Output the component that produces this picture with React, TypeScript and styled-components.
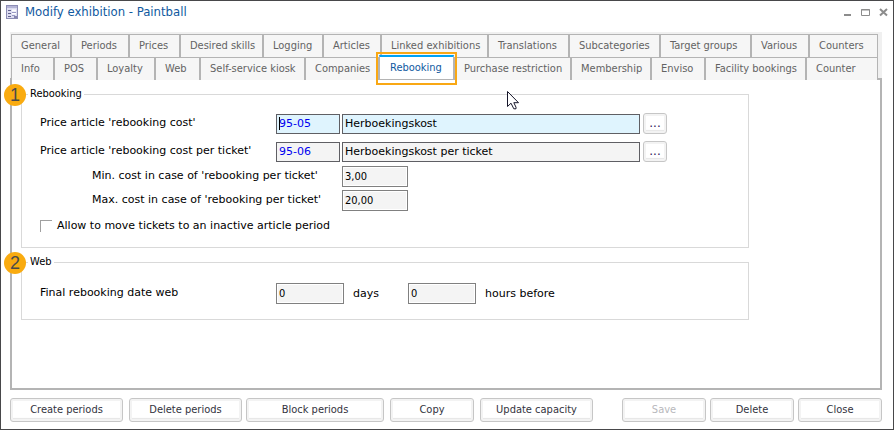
import React from "react";
import styled, { createGlobalStyle, css } from "styled-components";

const uiFont = `"DejaVu Sans Condensed", "Noto Sans", sans-serif`;
const formFont = `"DejaVu Sans", Verdana, sans-serif`;

const GlobalStyle = createGlobalStyle`
  *, *::before, *::after { box-sizing: border-box; }
  body { margin: 0; background: #fff; }
  button, input { font: inherit; margin: 0; }
`;

const Window = styled.div`
  position: relative;
  min-height: 100vh;
  display: flex;
  flex-direction: column;
  border: 1px solid #48484a;
  padding: 0 11px 7px 9px;
  background: #fff;
  font-family: ${uiFont};
  font-size: 11px;
  color: #000;
`;

const TitleBar = styled.header`
  display: flex;
  align-items: center;
  height: 22px;
  margin: 0 -7px 9px -4px;
`;

const Title = styled.h1`
  flex: 1;
  margin: 0 0 0 6px;
  font-size: 13px;
  line-height: 22px;
  font-weight: 400;
  color: #10599f;
`;

const WindowControls = styled.div`
  display: flex;
  gap: 8px;
`;

const WindowControl = styled.button`
  width: 10px;
  height: 10px;
  padding: 0;
  border: 0;
  background: none;
  svg { display: block; }
`;

const TabStrip = styled.nav`
  background: #f0f0f0;
  padding: 2px 4px 0 1px;
`;

const TabRow = styled.div<{ $columns: string; $height: number }>`
  display: grid;
  grid-template-columns: ${(p) => p.$columns};
  height: ${(p) => p.$height}px;
`;

const TabButton = styled.button<{ $active?: boolean }>`
  position: relative;
  min-width: 0;
  padding: 0 0 0 9px;
  border: 0 solid #b4b4b4;
  border-width: 1px 1px 0 1px;
  background: #f6f6f6;
  color: #636363;
  line-height: 20px;
  text-align: left;
  white-space: nowrap;

  ${(p) =>
    p.$active &&
    css`
      z-index: 1;
      height: 25px;
      margin: -2px 0 0;
      padding-left: 10px;
      border-top: 2px solid #00a2f4;
      border-bottom: 1px solid #b4b4b4;
      background: #fff;
      color: #10599f;

      &::after {
        content: "";
        position: absolute;
        inset: -5px -4px -6px -4px;
        border: 2px solid #f9a814;
      }
    `}
`;

const Panel = styled.main`
  flex: 1;
  border: 2px solid #b4b4b4;
  padding: 6px 9px 20px;
  font-family: ${formFont};
  font-size: 11px;
  line-height: 16px;
`;

const Group = styled.fieldset<{ $top: number; $bottom: number }>`
  position: relative;
  max-width: 728px;
  min-width: 0;
  margin: 0 0 6px;
  padding: ${(p) => p.$top}px 18px ${(p) => p.$bottom}px;
  border: 1px solid #d9d9d9;
`;

const Legend = styled.legend`
  margin-left: -12px;
  padding: 0 2px;
  font-family: ${uiFont};
  font-size: 11px;
  line-height: 16px;
`;

const Marker = styled.span`
  position: absolute;
  top: -18px;
  left: -18px;
  width: 22px;
  height: 22px;
  border-radius: 50%;
  background: #f9ab10;
  color: #4a4a4a;
  font: 18px/22px "Liberation Sans", sans-serif;
  text-align: center;
`;

const Row = styled.div<{ $top?: number }>`
  display: flex;
  align-items: center;
  min-height: 20px;
  margin-top: ${(p) => p.$top ?? 0}px;
`;

const FieldLabel = styled.label<{ $nested?: boolean }>`
  flex: none;
  width: ${(p) => (p.$nested ? 302 : 236)}px;
  padding-left: ${(p) => (p.$nested ? 52 : 0)}px;
  padding-bottom: 2px;
`;

const TextField = styled.input<{ $kind: "code" | "name" | "amount" | "count"; $focused?: boolean }>`
  height: 20px;
  width: 68px;
  padding: 0 2px;
  border: 1px solid #5f5f64;
  border-radius: 0;
  background: ${(p) => (p.$focused ? "#dff4fe" : "#f4f4f4")};
  color: #000;
  outline: 0;

  ${(p) => p.$kind === "code" && css`width: 64px; color: #0000f0;`}
  ${(p) => p.$kind === "name" && css`flex: 0 1 298px; min-width: 0; margin-left: 2px;`}
  ${(p) =>
    (p.$kind === "amount" || p.$kind === "count") &&
    css`
      height: 21px;
      padding: 0 2px 1px;
      border-color: #808080;
      box-shadow: inset 0 0 0 1px #fff;
      font-family: ${uiFont};
    `}
  ${(p) => p.$kind === "amount" && css`width: 66px;`}
`;

const CodeBox = styled.span`
  position: relative;
  display: flex;
`;

const Caret = styled.span`
  position: absolute;
  top: 3px;
  left: 3px;
  width: 1px;
  height: 13px;
  background: #000;
`;

const raised = css`
  border: 1px solid #c6c6c6;
  border-radius: 3px;
  background: #fff;
  box-shadow: inset 0 0 0 2px #f3f3f3, inset 0 -3px 1px #e6e6e6;
`;

const BrowseButton = styled.button`
  ${raised}
  width: 24px;
  height: 21px;
  margin: 0 0 0 3px;
  padding: 0;
  color: #30205c;
  font-size: 12px;
  line-height: 17px;
`;

const Unit = styled.label`
  flex: none;
  width: 64px;
  padding-left: 9px;
  white-space: nowrap;
`;

const CheckLabel = styled.label`
  display: flex;
  align-items: center;
  gap: 5px;
`;

const CheckBox = styled.input`
  appearance: none;
  width: 12px;
  height: 12px;
  border: 0 solid #a0a0a0;
  border-width: 1px 0 0 1px;
  background: #fff;
  &:checked { background: #a0a0a0; }
`;

const Footer = styled.footer`
  display: flex;
  margin-top: 8px;
`;

const ActionButton = styled.button<{ $size: number; $gap?: number; $push?: boolean }>`
  ${raised}
  flex: 0 1 ${(p) => p.$size}px;
  height: 24px;
  padding: 0;
  margin-left: ${(p) => (p.$push ? "auto" : `${p.$gap ?? 0}px`)};
  color: #33333d;
  line-height: 20px;
  white-space: nowrap;
  &:disabled { color: #b8b8bc; }
`;

const Pointer = styled.svg`
  position: absolute;
  top: 89px;
  left: 505px;
  z-index: 2;
  pointer-events: none;
`;

type TabSpec = [label: string, weight: number];

const upperTabs: TabSpec[] = [
  ["General", 60], ["Periods", 58], ["Prices", 51], ["Desired skills", 83],
  ["Logging", 60], ["Articles", 58], ["Linked exhibitions", 107], ["Translations", 81],
  ["Subcategories", 91], ["Target groups", 91], ["Various", 58], ["Counters", 69],
];

const lowerTabs: TabSpec[] = [
  ["Info", 43], ["POS", 43], ["Loyalty", 58], ["Web", 45],
  ["Self-service kiosk", 105], ["Companies", 74], ["Rebooking", 75], ["Purchase restriction", 117],
  ["Membership", 80], ["Enviso", 54], ["Facility bookings", 101], ["Counter", 72],
];

const columnsOf = (tabs: TabSpec[]) => tabs.map(([, w]) => `minmax(0, ${w}fr)`).join(" ");

function Tabs({ tabs, height, active }: { tabs: TabSpec[]; height: number; active?: string }) {
  return (
    <TabRow $columns={columnsOf(tabs)} $height={height} role="tablist">
      {tabs.map(([label]) => (
        <TabButton key={label} type="button" role="tab" aria-selected={label === active} $active={label === active}>
          {label}
        </TabButton>
      ))}
    </TabRow>
  );
}

function FormIcon() {
  return (
    <svg width="13" height="15" viewBox="0 0 13 15" aria-hidden="true">
      <rect x="0.5" y="0.5" width="11" height="13" fill="#dcdcf0" stroke="#8c8cb4" />
      <path d="M1 1h10v2H1z" fill="#b4b4d6" />
      <path d="M2 5.5h3M2 8.5h3M2 11.5h3" stroke="#62628e" />
      <path d="M6 5.5h4M6 8.5h4" stroke="#fff" strokeWidth="2" />
      <path d="M6 7.5h4M6 10.5h3" stroke="#9a9ac4" />
      <path d="M8 12h3" stroke="#8585ae" strokeWidth="2" />
    </svg>
  );
}

export default function App() {
  return (
    <>
      <GlobalStyle />
      <Window>
        <TitleBar>
          <FormIcon />
          <Title>Modify exhibition - Paintball</Title>
          <WindowControls>
            <WindowControl type="button" aria-label="Minimize">
              <svg width="10" height="10"><path d="M1 8h7" stroke="#8c8c8c" strokeWidth="2" /></svg>
            </WindowControl>
            <WindowControl type="button" aria-label="Maximize">
              <svg width="10" height="10">
                <path d="M0.500 2.500h8v6h-8zM0 3h9" fill="none" stroke="#8c8c8c" />
              </svg>
            </WindowControl>
            <WindowControl type="button" aria-label="Close window">
              <svg width="10" height="10">
                <path d="M1 2l7 6.500M8 2l-7 6.500" stroke="#8c8c8c" strokeWidth="2" />
              </svg>
            </WindowControl>
          </WindowControls>
        </TitleBar>

        <TabStrip aria-label="Exhibition sections">
          <Tabs tabs={upperTabs} height={23} />
          <Tabs tabs={lowerTabs} height={21} active="Rebooking" />
        </TabStrip>

        <Panel>
          <Group $top={11} $bottom={11}>
            <Legend>Rebooking</Legend>
            <Marker>1</Marker>
            <Row>
              <FieldLabel htmlFor="cost-code">Price article 'rebooking cost'</FieldLabel>
              <CodeBox>
                <TextField id="cost-code" $kind="code" $focused defaultValue="95-05" />
                <Caret />
              </CodeBox>
              <TextField $kind="name" $focused aria-label="Rebooking cost article" defaultValue="Herboekingskost" />
              <BrowseButton type="button" aria-label="Browse rebooking cost">...</BrowseButton>
            </Row>
            <Row $top={7}>
              <FieldLabel htmlFor="ticket-code">Price article 'rebooking cost per ticket'</FieldLabel>
              <TextField id="ticket-code" $kind="code" defaultValue="95-06" />
              <TextField $kind="name" aria-label="Rebooking cost per ticket article" defaultValue="Herboekingskost per ticket" />
              <BrowseButton type="button" aria-label="Browse rebooking cost per ticket">...</BrowseButton>
            </Row>
            <Row $top={4}>
              <FieldLabel $nested htmlFor="min-cost">Min. cost in case of 'rebooking per ticket'</FieldLabel>
              <TextField id="min-cost" $kind="amount" defaultValue="3,00" />
            </Row>
            <Row $top={3}>
              <FieldLabel $nested htmlFor="max-cost">Max. cost in case of 'rebooking per ticket'</FieldLabel>
              <TextField id="max-cost" $kind="amount" defaultValue="20,00" />
            </Row>
            <Row $top={5}>
              <CheckLabel>
                <CheckBox type="checkbox" />
                Allow to move tickets to an inactive article period
              </CheckLabel>
            </Row>
          </Group>

          <Group $top={13} $bottom={15}>
            <Legend>Web</Legend>
            <Marker>2</Marker>
            <Row>
              <FieldLabel htmlFor="days">Final rebooking date web</FieldLabel>
              <TextField id="days" $kind="count" defaultValue="0" />
              <Unit htmlFor="days">days</Unit>
              <TextField id="hours" $kind="count" defaultValue="0" />
              <Unit htmlFor="hours">hours before</Unit>
            </Row>
          </Group>
        </Panel>

        <Footer>
          <ActionButton type="button" $size={113}>Create periods</ActionButton>
          <ActionButton type="button" $size={113} $gap={6}>Delete periods</ActionButton>
          <ActionButton type="button" $size={138} $gap={4}>Block periods</ActionButton>
          <ActionButton type="button" $size={84} $gap={6}>Copy</ActionButton>
          <ActionButton type="button" $size={113} $gap={6}>Update capacity</ActionButton>
          <ActionButton type="button" $size={84} $push disabled>Save</ActionButton>
          <ActionButton type="button" $size={84} $gap={4}>Delete</ActionButton>
          <ActionButton type="button" $size={84} $gap={4}>Close</ActionButton>
        </Footer>

        <Pointer width="14" height="21" viewBox="0 0 14 21" aria-hidden="true">
          <path
            d="M1.500 1.500v15l3.500-3.300 2.800 5.600h2.200v-1.600l-2.200-4.500h4.700z"
            fill="#fff"
            stroke="#16162a"
          />
        </Pointer>
      </Window>
    </>
  );
}
